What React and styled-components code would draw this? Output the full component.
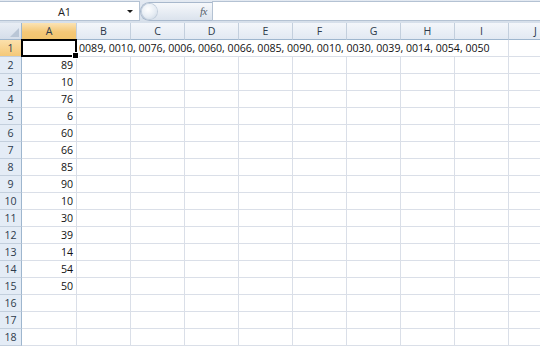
import styled, { createGlobalStyle } from 'styled-components';

const GlobalStyle = createGlobalStyle`
  html, body {
    margin: 0;
    padding: 0;
    background: #ffffff;
    overflow: hidden;
  }
  body {
    font-family: "Open Sans", "Liberation Sans", sans-serif;
  }
`

const columns = ['A', 'B', 'C', 'D', 'E', 'F', 'G', 'H', 'I', 'J']
const values = [null, 89, 10, 76, 6, 60, 66, 85, 90, 10, 30, 39, 14, 54, 50, null, null, null]
const rowOne = '0089, 0010, 0076, 0006, 0060, 0066, 0085, 0090, 0010, 0030, 0039, 0014, 0054, 0050'

const Window = styled.div`
  width: 540px;
  height: 346px;
  overflow: hidden;
  display: flex;
  flex-direction: column;
`

const TopBar = styled.div`
  display: flex;
  align-items: center;
  height: 23px;
  box-sizing: border-box;
  padding: 1px 0 2px;
  background: linear-gradient(#e4eaf2, #d6dfea);
`

const NameBox = styled.div`
  width: 140px;
  height: 20px;
  box-sizing: border-box;
  display: flex;
  align-items: center;
  background: #ffffff;
  border: 1px solid #b4c2d3;
  border-left: none;
  font-size: 11px;
  color: #1e1e1e;
`

const NameText = styled.span`
  flex: 1;
  text-align: center;
  padding-left: 2px;
`

const DropArrow = styled.span`
  width: 0;
  height: 0;
  margin-right: 6px;
  border-left: 3px solid transparent;
  border-right: 3px solid transparent;
  border-top: 3px solid #1b1b1b;
`

const FxPill = styled.div`
  width: 72px;
  height: 19px;
  box-sizing: border-box;
  display: flex;
  align-items: center;
  justify-content: space-between;
  padding: 0 5px 0 1px;
  border: 1px solid #a8b8cc;
  border-right: none;
  border-radius: 10px 0 0 10px;
  background: linear-gradient(#f6f8fb, #dbe3ed);
`

const PillKnob = styled.span`
  width: 15px;
  height: 15px;
  border-radius: 50%;
  background: radial-gradient(circle at 40% 35%, #ffffff 0%, #e7edf4 55%, #c9d4e1 100%);
  box-shadow: 0 0 0 1px #c2cedc;
`

const FxLabel = styled.span`
  font-family: "Liberation Serif", serif;
  font-style: italic;
  font-size: 11px;
  color: #555f6c;
  letter-spacing: -0.5px;
`

const FormulaInput = styled.div`
  flex: 1;
  height: 20px;
  box-sizing: border-box;
  background: #ffffff;
  border: 1px solid #b4c2d3;
  border-right: none;
`

const Sheet = styled.div`
  display: grid;
  grid-template-columns: 22px 55px repeat(9, 54px);
  grid-auto-rows: 17px;
  font-size: 10.6px;
  color: #111111;
`

const Corner = styled.div`
  box-sizing: border-box;
  border-right: 1px solid #9eb6ce;
  border-bottom: 1px solid #9eb6ce;
  background: linear-gradient(#e9eef5, #d5deea);
  display: flex;
  align-items: flex-end;
  justify-content: flex-end;
  padding: 0 2px 2px 0;
`

const ColHead = styled.div`
  box-sizing: border-box;
  display: flex;
  align-items: center;
  justify-content: center;
  border-right: 1px solid #c3cfdd;
  border-bottom: 1px solid #9eb6ce;
  background: ${p => p.$active
    ? 'linear-gradient(#fbe3b4, #f4c878 55%, #f1c46d)'
    : 'linear-gradient(#f3f6fa, #e2e9f2)'};
  color: #2d3a4b;
`

const RowHead = styled.div`
  box-sizing: border-box;
  display: flex;
  align-items: center;
  justify-content: center;
  border-right: 1px solid #9eb6ce;
  border-bottom: 1px solid #c3cfdd;
  background: ${p => p.$active
    ? 'linear-gradient(#fbe0ac, #f4c878)'
    : '#e4ecf6'};
  color: #2d3a4b;
`

const Cell = styled.div`
  box-sizing: border-box;
  display: flex;
  align-items: center;
  justify-content: flex-end;
  padding-right: 3px;
  border-right: 1px solid #dadfe8;
  border-bottom: 1px solid #dadfe8;
  white-space: nowrap;
`

const SelectedCell = styled(Cell)`
  position: relative;
  &::after {
    content: '';
    position: absolute;
    left: -1px;
    top: -1px;
    right: -1px;
    bottom: -1px;
    border: 2px solid #000000;
  }
  &::before {
    content: '';
    position: absolute;
    right: -3px;
    bottom: -3px;
    width: 5px;
    height: 5px;
    background: #000000;
    border: 1px solid #ffffff;
    z-index: 2;
  }
`

const TextCell = styled(Cell)`
  grid-column: span 8;
  justify-content: flex-start;
  padding: 0 0 0 2px;
`

function CornerMark() {
  return (
    <svg width="9" height="9" viewBox="0 0 9 9">
      <polygon points="9,0 9,9 0,9" fill="#b9c6d6" />
    </svg>
  )
}

function App() {
  return (
    <Window>
      <GlobalStyle />
      <TopBar>
        <NameBox>
          <NameText>A1</NameText>
          <DropArrow />
        </NameBox>
        <FxPill>
          <PillKnob />
          <FxLabel>fx</FxLabel>
        </FxPill>
        <FormulaInput />
      </TopBar>
      <Sheet>
        <Corner>
          <CornerMark />
        </Corner>
        {columns.map(col => (
          <ColHead key={col} $active={col === 'A'}>{col}</ColHead>
        ))}
        {values.map((value, i) => {
          const row = i + 1
          if (row === 1) {
            return [
              <RowHead key="h1" $active>1</RowHead>,
              <SelectedCell key="a1" />,
              <TextCell key="b1">{rowOne}</TextCell>,
              <Cell key="j1" />
            ]
          }
          return [
            <RowHead key={'h' + row}>{row}</RowHead>,
            <Cell key={'a' + row}>{value}</Cell>,
            ...columns.slice(1).map(col => <Cell key={col + row} />)
          ]
        })}
      </Sheet>
    </Window>
  );
}

export default App;
